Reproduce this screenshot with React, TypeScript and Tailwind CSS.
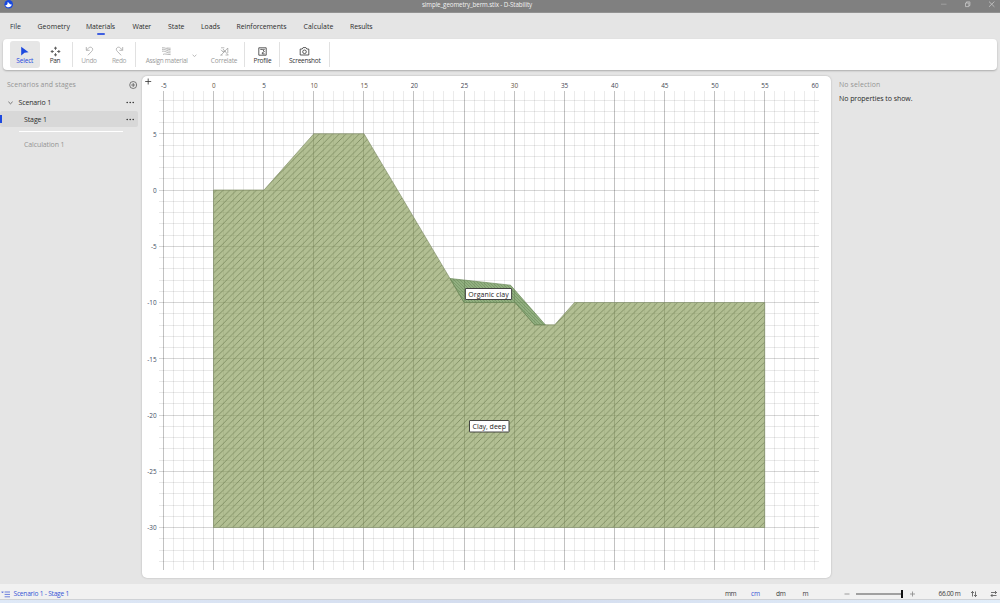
import React from "react";

const X = (m: number) => 213.5 + m * 10.02;
const Y = (m: number) => 190 - m * 11.25;

const menu: { label: string; box: string; width: number }[] = [
  { label: "File", box: "w-[27.5px]", width: 11 },
  { label: "Geometry", box: "w-[48.5px]", width: 32.5 },
  { label: "Materials", box: "w-[46.5px]", width: 29 },
  { label: "Water", box: "w-[35.5px]", width: 18.5 },
  { label: "State", box: "w-[33px]", width: 16.5 },
  { label: "Loads", box: "w-[35.5px]", width: 19 },
  { label: "Reinforcements", box: "w-[67px]", width: 50 },
  { label: "Calculate", box: "w-[46.5px]", width: 30 },
  { label: "Results", box: "w-[40px]", width: 22.5 },
];

/** Single line of text fitted to a known width. */
function Label({ text, width, size = 7, weight = 400, fill = "currentColor" }: { text: string; width: number; size?: number; weight?: number; fill?: string }) {
  const ref = React.useRef<HTMLSpanElement>(null);
  const [spacing, setSpacing] = React.useState(0);
  React.useLayoutEffect(() => {
    if (ref.current) {
      const natural = ref.current.getBoundingClientRect().width;
      setSpacing((width - natural) / text.length);
    }
  }, []);
  return (
    <span ref={ref} className="inline-block whitespace-nowrap leading-[10px]" style={{ fontSize: size, fontWeight: weight, color: fill, letterSpacing: spacing }}>
      {text}
    </span>
  );
}

function Tool({ box, label, width, color, children }: { box: string; label: string; width: number; color: string; children: React.ReactNode }) {
  return (
    <div className={`flex h-[27px] shrink-0 flex-col items-center rounded-[3px] pt-[5px] ${box}`} style={{ color }}>
      <svg width="11" height="11" viewBox="0 0 11 11" fill="none" stroke="currentColor" strokeWidth="0.8">
        {children}
      </svg>
      <span className="-mt-px flex">
        <Label text={label} width={width} size={6.5} />
      </span>
    </div>
  );
}

const Sep = ({ box }: { box: string }) => <div className={`h-[25px] w-px shrink-0 bg-[#e1e1e1] ${box}`} />;

const Dots = () => (
  <svg width="9" height="3" viewBox="0 0 9 3" fill="#333">
    <circle cx="1.2" cy="1.5" r="0.8" />
    <circle cx="4.2" cy="1.5" r="0.8" />
    <circle cx="7.2" cy="1.5" r="0.8" />
  </svg>
);

function Chart() {
  const xs = Array.from({ length: 66 }, (_, i) => i - 5);
  const ys = Array.from({ length: 42 }, (_, i) => i - 33);
  const poly = (pts: number[][]) => pts.map((p) => p.join(",")).join(" ");
  const deep = poly([[213.5, 190], [264, 190], [313.8, 133.8], [364, 133.8], [450, 278.5], [464, 302.5], [515, 302.5], [534.5, 324.8], [554.7, 324.8], [574.5, 302.5], [764.7, 302.5], [764.7, 527.5], [213.5, 527.5]]);
  const organic = poly([[450, 278.5], [510.5, 285.2], [545.3, 324.8], [534.5, 324.8], [515, 302.5], [464, 302.5]]);
  return (
    <svg className="block" width="689" height="502" viewBox="142 76 689 502" fontFamily="'Open Sans', 'Noto Sans', sans-serif">
      <defs>
        <pattern id="hatch" width="6.667" height="6.667" patternUnits="userSpaceOnUse">
          <path d="M-1 7.667L7.667 -1M-1 1L1 -1M5.667 7.667L7.667 5.667" stroke="#64754a" strokeOpacity="0.8" strokeWidth="0.75" />
        </pattern>
        <pattern id="dense" width="3" height="3" patternUnits="userSpaceOnUse">
          <path d="M-1 -1L4 4M-1 2L1 4M2 -1L4 1" stroke="#5f8250" strokeOpacity="0.7" strokeWidth="0.6" />
        </pattern>
      </defs>
      <g shapeRendering="crispEdges">
        {xs.map((m) => (
          <line key={m} x1={X(m)} x2={X(m)} y1="91" y2="570" stroke="#000" strokeOpacity={m % 5 === 0 && m < 60 ? 0.24 : 0.08} />
        ))}
        {ys.map((m) => (
          <line key={m} x1="159" x2="819" y1={Y(m)} y2={Y(m)} stroke="#000" strokeOpacity={m % 5 === 0 ? 0.16 : 0.085} />
        ))}
      </g>
      <polygon points={deep} fill="#7b9045" fillOpacity="0.58" />
      <polygon points={deep} fill="url(#hatch)" stroke="#87936f" strokeWidth="0.7" />
      <polygon points={organic} fill="#4a7a2c" fillOpacity="0.6" />
      <polygon points={organic} fill="url(#dense)" stroke="#6d8a5a" strokeWidth="0.7" />
      <path d="M145.2 81.5h6M148.2 78.5v6" stroke="#333" strokeWidth="0.8" />
      <g fontSize="6.4" textAnchor="middle">
        {xs.filter((m) => m % 5 === 0).map((m) => (
          <text key={m} x={X(m) + 0.4} y="87.8" fill={[0, 10, 15, 30].includes(m) ? "#66523c" : "#3f4754"}>{m}</text>
        ))}
      </g>
      <g fontSize="6.4" textAnchor="end" fill="#3f4e63">
        {[5, 0, -5, -10, -15, -20, -25, -30].map((m) => (
          <text key={m} x="156.6" y={Y(m) + 2.8}>{m}</text>
        ))}
      </g>
      <rect x="465.4" y="288.5" width="46.2" height="11" rx="0.5" fill="#fff" stroke="#333" strokeWidth="0.9" />
      <text x="468.3" y="297" fontSize="7" fill="#222" textLength="40.5">Organic clay</text>
      <rect x="469.5" y="420.5" width="39.5" height="11.5" rx="0.5" fill="#fff" stroke="#333" strokeWidth="0.9" />
      <text x="472.5" y="429.2" fontSize="7" fill="#222" textLength="33.5">Clay, deep</text>
    </svg>
  );
}

export default function App() {
  return (
    <div className="flex h-[603px] w-[1000px] flex-col overflow-hidden bg-[#e5e5e5] font-['Open_Sans','Noto_Sans',sans-serif] text-[#2b2b2b]">
      <header className="grid h-[13px] shrink-0 grid-cols-[422px_1fr_66px] border-b border-[#929292] bg-[#808080] text-[#f2f2f2]">
        <svg className="ml-1" width="10" height="10" viewBox="0 0 10 10">
          <circle cx="4.7" cy="4.3" r="4.3" fill="#1748df" />
          <path d="M1.3 5.2C2.8 5.4 3.9 4 3.6 1.9C5 2 5.2 4.6 7.9 4.6C7.3 7.6 2.6 8.4 1.3 5.2Z" fill="#fff" />
        </svg>
        <div className="flex"><Label text="simple_geometry_berm.stix - D-Stability" width={110} size={6.2} /></div>
        <svg width="66" height="12" viewBox="934 0 66 12" fill="none" stroke="#c8c8c8" strokeWidth="0.8">
          <path d="M941 4.2h5.5" stroke="#a6a6a6" />
          <path d="M965.5 3h3.4v3.6h-3.4zM966.5 3V1.9h3.4v3.6h-1" />
          <path d="M989 1.6l5.4 5.2M994.4 1.6L989 6.8" />
        </svg>
      </header>

      <nav className="flex h-[26px] shrink-0 pl-[10px] pt-[9px]">
        {menu.map((m) => (
          <div key={m.label} className={`shrink-0 ${m.box}`}>
            <div className="flex h-[11px]"><Label text={m.label} width={m.width} size={6.9} fill={m.label === "File" ? "#26313f" : "#2b2b2b"} /></div>
            {m.label === "Materials" && <div className="ml-[11px] h-[1.5px] w-[8px] rounded-full bg-[#3f5fe0]" />}
          </div>
        ))}
      </nav>

      <div className="mx-[3px] flex h-[31px] shrink-0 rounded-[4px] bg-white pl-[7px] pt-[2px] shadow-[0_1px_2px_rgba(0,0,0,0.25)]">
        <Tool box="w-[29.5px] bg-[#e6e6e6]" label="Select" width={17} color="#1d49df"><path d="M2.2 .8L9.6 6.3L5.5 6.7L2.2 9.6Z" fill="currentColor" stroke="none" /></Tool>
        <Tool box="w-[31px]" label="Pan" width={10.5} color="#333"><path d="M5.5 1.3v2.5M5.5 7.2v2.5M1.3 5.5h2.5M7.2 5.5h2.5M4 2.6l1.5-1.4L7 2.6M4 8.4l1.5 1.4L7 8.4M2.6 4L1.2 5.5L2.6 7M8.4 4l1.4 1.5L8.4 7" /></Tool>
        <Sep box="mt-px ml-[1.5px] mr-[1px]" />
        <Tool box="w-[30px]" label="Undo" width={15.5} color="#a4a4a4"><path d="M2.3 1v3.3h3.3M2.4 4.2L4.5 2.1C5.8 .8 7.4 1 8.2 2C9 3.1 8.7 4.3 7.8 5.2L3.9 9.3" /></Tool>
        <Tool box="w-[30px]" label="Redo" width={14} color="#a4a4a4"><path d="M8.7 1v3.3H5.4M8.6 4.2L6.5 2.1C5.2 .8 3.6 1 2.8 2C2 3.1 2.3 4.3 3.2 5.2L7.1 9.3" /></Tool>
        <Sep box="mt-px ml-[1px]" />
        <Tool box="ml-[7.7px] w-[46px]" label="Assign material" width={42} color="#999"><path d="M1 1.8C3.2 1.6 4.2 2 5.5 2.7S8.2 3.6 9.6 3.6M1 3.4C3.2 3.2 4.2 3.6 5.5 4.3S8.2 5.2 9.6 5.2M1 5.2C3.2 5 4.2 5.4 5.5 6.1S8.2 6.9 9.6 6.9M2 8.4C4 7.4 5.5 8.5 9.6 8.6M5.5 2L9.6 2.2" strokeWidth="0.7" /></Tool>
        <svg className="mt-[13px] ml-[2.3px] shrink-0" width="5" height="4" viewBox="0 0 5 4" fill="none" stroke="#aaa" strokeWidth="0.8"><path d="M.6 .8l1.9 1.7L4.4 .8" /></svg>
        <Tool box="ml-[11.6px] w-[31px]" label="Correlate" width={26.5} color="#999"><path d="M2 1.8h3.3M2 9.2L8.8 2M2 3.8l3 3M4 3l5 5.8M6.5 9h3M8.8 2v5M1.4 9.1h2.2M3.5 5.3h3.3" strokeWidth="0.7" /></Tool>
        <Sep box="mt-px ml-[4.9px]" />
        <Tool box="ml-[0.5px] w-[33px]" label="Profile" width={18} color="#333"><path d="M1.8 1.8h7.4v7.4H1.8zM3.3 3.4h2.1l2 2.1l-2.1 1.2v1.2h2.4M6.2 3.4h1.5" /></Tool>
        <Sep box="mt-px" />
        <Tool box="ml-[0.7px] w-[48.3px]" label="Screenshot" width={31.5} color="#333"><path d="M1.2 3h2l.9-1.4h2.8L7.8 3h2v6H1.2z" /><circle cx="5.5" cy="5.8" r="1.8" /></Tool>
        <Sep box="mt-px" />
      </div>

      <main className="grid min-h-0 flex-1 grid-cols-[142px_689px_1fr]">
        <aside className="pt-[10px]">
          <div className="flex h-[10px] items-center justify-between pl-[7px] pr-[4.5px]">
            <Label text="Scenarios and stages" width={69} size={6.9} fill="#949494" weight={500} />
            <svg width="9" height="9" viewBox="0 0 9 9" fill="none" stroke="#4b4b4b" strokeWidth="0.7"><circle cx="4.2" cy="4" r="3.5" /><path d="M2.2 4h4M4.2 2v4" /></svg>
          </div>
          <div className="mt-[4px] flex h-[17px] items-center pl-[8px] pr-[7.5px]">
            <svg width="5" height="4" viewBox="0 0 5 4" fill="none" stroke="#555" strokeWidth="0.8"><path d="M.4 .8l2.1 2L4.6 .8" /></svg>
            <div className="ml-[5.5px] flex flex-1 pt-px"><Label text="Scenario 1" width={32.5} size={7} /></div>
            <Dots />
          </div>
          <div className="mr-[4px] flex h-[16px] items-center rounded-[2px] bg-[#d8d8d8] pr-[3.5px]">
            <div className="h-[8px] w-[2px] bg-[#1d49df]" />
            <div className="ml-[22px] flex flex-1 pt-[2px]"><Label text="Stage 1" width={23} size={7} /></div>
            <Dots />
          </div>
          <div className="ml-[19px] mt-[4px] h-px w-[104px] bg-white" />
          <div className="ml-[24px] mt-[8px] flex"><Label text="Calculation 1" width={40.5} size={7} fill="#949494" /></div>
        </aside>
        <section className="mt-[6px] h-[502px] rounded-[5px] bg-white shadow-[0_0_2px_rgba(0,0,0,0.25)]"><Chart /></section>
        <aside className="pl-[8px] pt-[10px]">
          <div className="flex h-[14px]"><Label text="No selection" width={41.5} size={6.9} fill="#949494" weight={500} /></div>
          <div className="flex"><Label text="No properties to show." width={73.5} size={7} /></div>
        </aside>
      </main>

      <footer className="flex h-[15px] shrink-0 items-center bg-[#f1f1f1] pt-[5px] text-[#3b3b3b]">
        <svg className="ml-[1px] mr-[3.5px]" width="9" height="7" viewBox="0 0 9 7" fill="none" stroke="#4a63d8" strokeWidth="0.8"><path d="M.4 1h2.2M1.5 1v.8M3.6 1H9M3.6 3.4H9M3.6 5.8H9" /></svg>
        <div className="flex w-[711.5px]"><Label text="Scenario 1 - Stage 1" width={55.5} size={6.6} fill="#3554d6" /></div>
        <div className="flex w-[26px]"><Label text="mm" width={11} size={6.6} /></div>
        <div className="flex w-[25px]"><Label text="cm" width={9} size={6.6} fill="#3554d6" /></div>
        <div className="flex w-[26.5px]"><Label text="dm" width={9.5} size={6.6} /></div>
        <div className="flex w-[41px]"><Label text="m" width={5.5} size={6.6} /></div>
        <svg width="72" height="10" viewBox="844 0 72 10" fill="none">
          <path d="M844.5 5h5M910 5h5M912.5 2.5v5" stroke="#888" strokeWidth="0.8" />
          <path d="M856 5h47" stroke="#858585" strokeWidth="1.5" />
          <path d="M902 1v8" stroke="#111" strokeWidth="2" />
        </svg>
        <div className="ml-[23px] flex w-[31px]"><Label text="66.00 m" width={22} size={6.5} /></div>
        <svg width="30" height="10" viewBox="970 0 30 10" fill="none" stroke="#3b3b3b" strokeWidth="0.7"><path d="M972.5 7.5v-5M971 4l1.5-1.5L974 4M975.5 2.5v5M974 6l1.5 1.5L977 6M991 3.5h5.5M995 2l1.5 1.5L995 5M996.5 6.5H991M992.5 5L991 6.5L992.5 8" /></svg>
      </footer>
      <div className="h-[4px] shrink-0 border-t border-[#cfd2d6] bg-linear-to-r from-[#dfe9f7] via-[#d3dcee] to-[#e2eefa]" />
    </div>
  );
}
